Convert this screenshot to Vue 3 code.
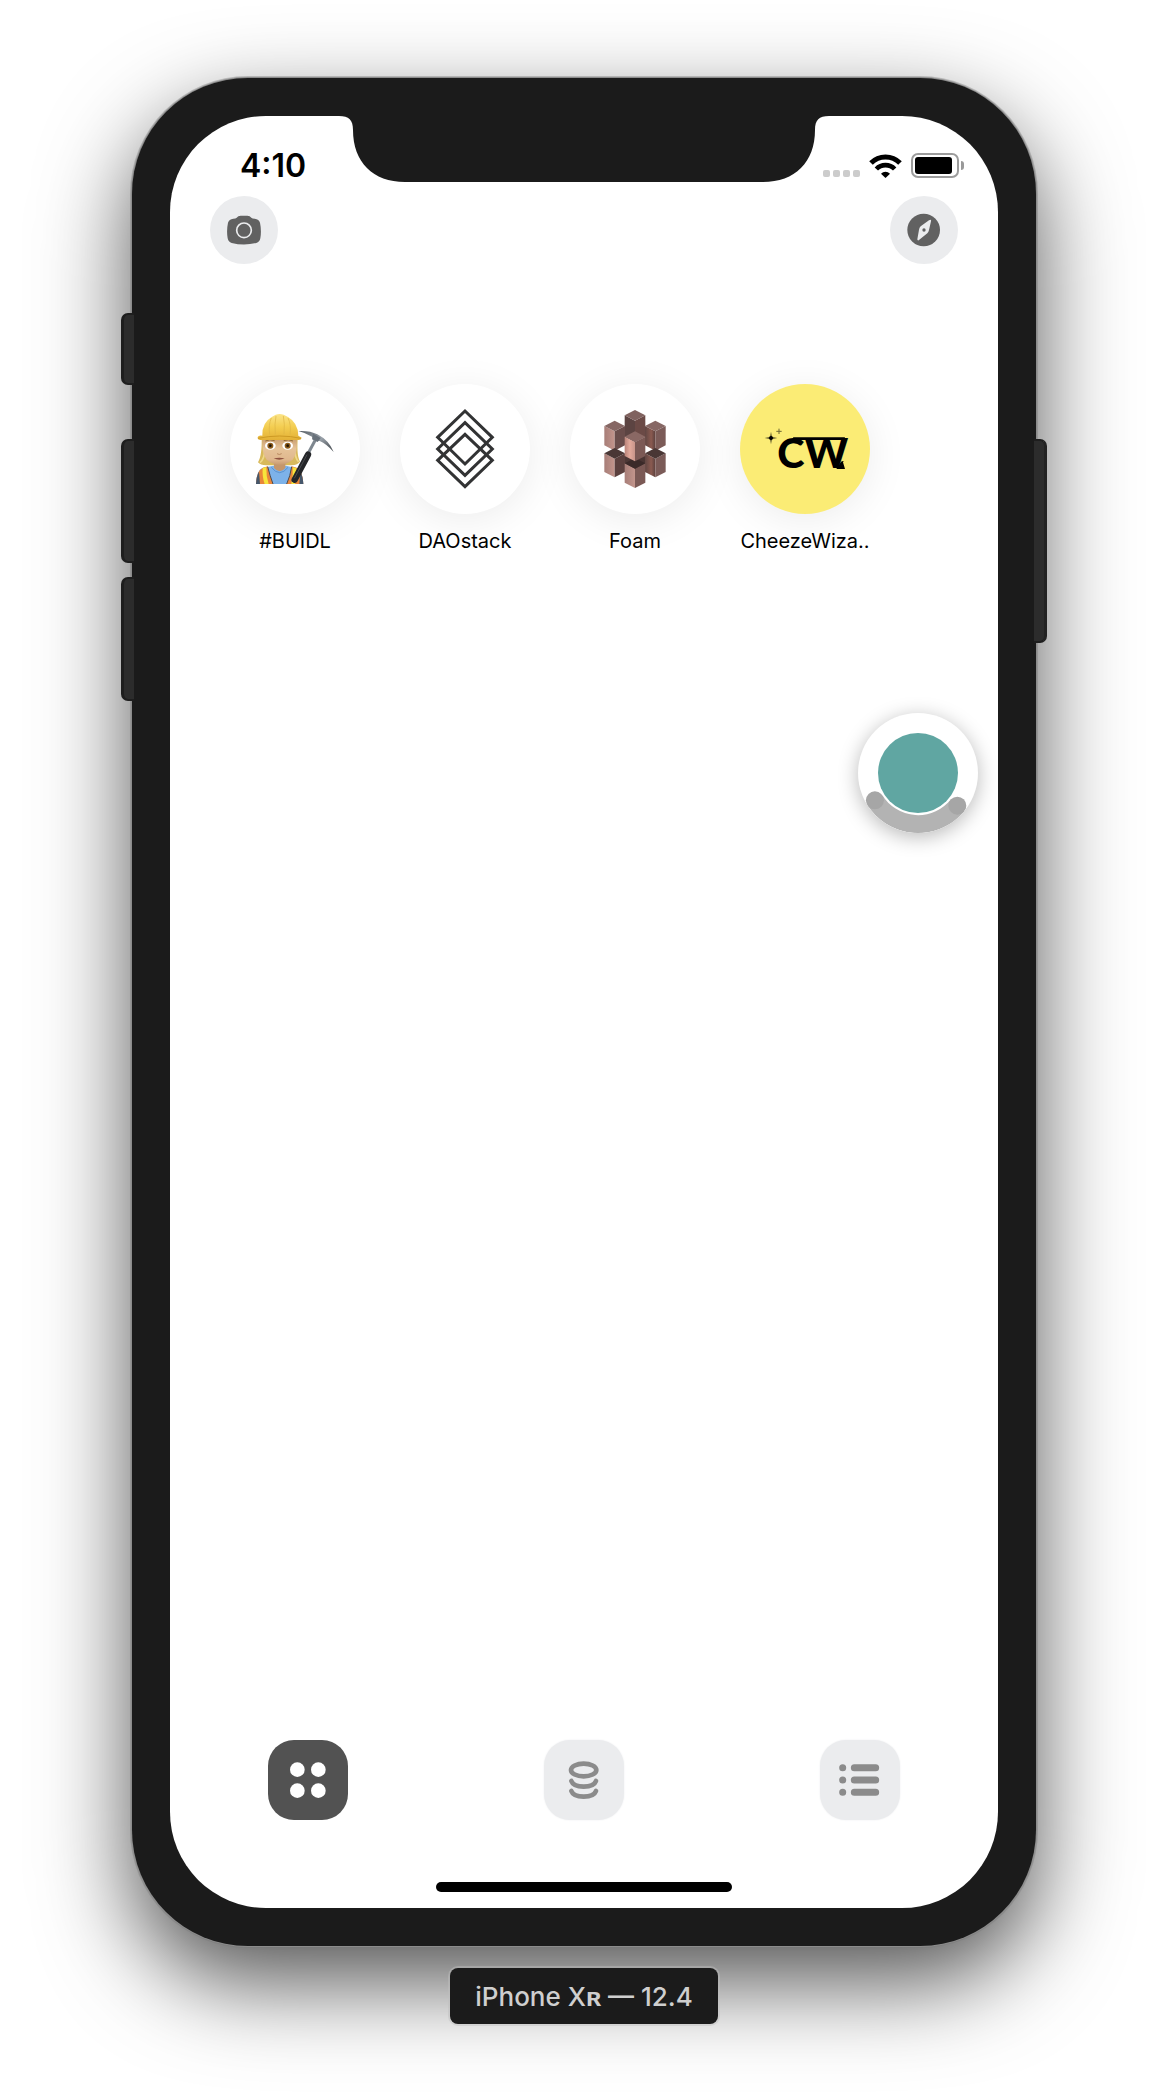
<script setup>
// Prisms of the Foam mark, painted back to front.
const prisms = [
  { x: 195, y: 78, h: 64, top: '#80625f', left: '#5c4442', right: '#6b4a46' },
  { x: 195, y: 194, h: 46, top: '#3d2d2c', left: '#4d3836', right: '#4a3533' },
  { x: 134, y: 110, h: 58, top: '#866764', left: 'url(#rose)', right: '#6a4d4b' },
  { x: 256, y: 110, h: 58, top: '#866764', left: 'url(#shade)', right: '#7b5b58' },
  { x: 134, y: 192, h: 56, top: '#4a3735', left: 'url(#rose)', right: '#5b403e' },
  { x: 256, y: 192, h: 56, top: '#4a3735', left: 'url(#shade)', right: '#7b5b58' },
  { x: 195, y: 222, h: 58, top: '#3b2a29', left: 'url(#rose)', right: '#7b5955' },
  { x: 195, y: 142, h: 58, top: '#8a6864', left: 'url(#bright)', right: '#7b5955' }
]
const face = {
  top: p => `${p.x - 31},${p.y + 16} ${p.x},${p.y} ${p.x + 31},${p.y + 16} ${p.x},${p.y + 32}`,
  left: p => `${p.x - 31},${p.y + 16} ${p.x},${p.y + 32} ${p.x},${p.y + 32 + p.h} ${p.x - 31},${p.y + 16 + p.h}`,
  right: p => `${p.x + 31},${p.y + 16} ${p.x},${p.y + 32} ${p.x},${p.y + 32 + p.h} ${p.x + 31},${p.y + 16 + p.h}`
}
const apps = [
  { id: 'buidl', name: '#BUIDL' },
  { id: 'daostack', name: 'DAOstack' },
  { id: 'foam', name: 'Foam' },
  { id: 'cheeze', name: 'CheezeWiza..' }
]
</script>

<template>
  <div class="page">
    <div class="device">
      <i class="key key-mute"></i>
      <i class="key key-up"></i>
      <i class="key key-down"></i>
      <i class="key key-power"></i>

      <main class="screen">
        <svg class="notch" viewBox="0 0 490 66" aria-hidden="true">
          <path d="M0 0C10 0 14 4 14 14C14 46 34 66 66 66H424C456 66 476 46 476 14C476 4 480 0 490 0Z" fill="#1b1b1b" />
        </svg>

        <div class="status">
          <time>4:10</time>
          <div class="indicators">
            <div class="signal"><i></i><i></i><i></i><i></i></div>
            <svg class="wifi" viewBox="0 0 99 72" fill="none" stroke="#000" aria-hidden="true">
              <path d="M6 27A61 61 0 0 1 93 27" stroke-width="15" />
              <path d="M22 45A38 38 0 0 1 77 45" stroke-width="14" />
              <path d="M49.500 72L36 59A19 19 0 0 1 63 59Z" fill="#000" stroke="none" />
            </svg>
            <div class="battery"><i class="charge"></i></div>
          </div>
        </div>

        <header class="toolbar">
          <button class="round" aria-label="Camera">
            <svg viewBox="0 0 204 204" aria-hidden="true">
              <path d="M80 65Q84 59 92 59H112Q120 59 124 65Q127 68 134 68Q147 69 150 80Q155 104 151 127Q149 138 139 141Q102 150 65 141Q55 138 53 127Q49 104 54 80Q57 69 70 68Q77 68 80 65Z" fill="#616161" />
              <circle cx="102" cy="103" r="22" fill="none" stroke="#ebecee" stroke-width="5" />
            </svg>
          </button>
          <button class="round" aria-label="Explore">
            <svg viewBox="0 0 204 204" aria-hidden="true">
              <circle cx="101" cy="102" r="49" fill="#616161" />
              <path d="M122 71Q124 72 123 76L117 102Q116 108 112 112L86 133Q82 134 82 130L87 101Q88 95 92 91L117 73Z" fill="#ebecee" />
              <circle cx="102" cy="102" r="5" fill="#616161" />
            </svg>
          </button>
        </header>

        <section class="apps">
          <button v-for="app in apps" :key="app.id" class="app">
            <span class="disc" :class="app.id">
              <svg v-if="app.id === 'buidl'" viewBox="0 0 390 390" aria-hidden="true">
                <defs>
                  <linearGradient id="hat" x1="0" y1="0" x2="0" y2="1">
                    <stop offset="0" stop-color="#fbe488" /><stop offset="0.500" stop-color="#f3cd50" /><stop offset="1" stop-color="#e3b036" />
                  </linearGradient>
                  <linearGradient id="skin" x1="0" y1="0" x2="0" y2="1">
                    <stop offset="0" stop-color="#c79c6f" /><stop offset="0.400" stop-color="#e6c399" /><stop offset="0.800" stop-color="#e0b88e" /><stop offset="1" stop-color="#c99b70" />
                  </linearGradient>
                  <linearGradient id="steel" x1="0" y1="0" x2="1" y2="1">
                    <stop offset="0" stop-color="#555c63" /><stop offset="0.500" stop-color="#9aa2aa" /><stop offset="1" stop-color="#3b4045" />
                  </linearGradient>
                </defs>
                <path d="M95 160C96 195 93 220 84 235Q92 245 112 244L184 244Q204 242 210 233C201 215 202 190 203 160Z" fill="#d8b95b" />
                <path d="M90 236Q104 225 104 196M206 234Q194 222 195 196" fill="none" stroke="#efd98a" stroke-width="5" />
                <path d="M78 300Q79 260 97 252L130 245H168L200 252Q218 260 220 300Z" fill="#7db2e9" />
                <path d="M132 232H166V252Q149 272 132 252Z" fill="#c4966c" />
                <path d="M124 250Q149 282 174 250" fill="none" stroke="#5a93d1" stroke-width="3" />
                <path d="M78 300Q79 260 99 251L113 247Q119 275 129 300Z" fill="#e9863a" />
                <path d="M220 300Q219 260 200 251L185 247Q182 275 170 300Z" fill="#e9863a" />
                <path d="M98 252Q96 278 104 300H116Q108 276 109 249Z" fill="#f7e43b" />
                <path d="M188 250Q190 272 184 300H195Q202 274 199 252Z" fill="#f7e43b" />
                <path d="M78 300Q79 277 87 263L90 300ZM220 300Q219 277 211 263L208 300Z" fill="#45576c" />
                <path d="M113 248Q120 276 129 300M185 248Q181 276 170 300" fill="none" stroke="#4a4b4f" stroke-width="3" />
                <path d="M97 162H200Q204 207 188 227Q170 242 149 242Q128 242 110 227Q94 207 97 162Z" fill="url(#skin)" />
                <ellipse cx="121" cy="185" rx="16" ry="12" fill="#fff" />
                <ellipse cx="173" cy="185" rx="16" ry="12" fill="#fff" />
                <circle cx="121" cy="185" r="9" fill="#8a5a1b" /><circle cx="121" cy="185" r="4" fill="#1e1307" />
                <circle cx="173" cy="185" r="9" fill="#8a5a1b" /><circle cx="173" cy="185" r="4" fill="#1e1307" />
                <path d="M106 171Q119 164 134 170M161 170Q176 164 189 171" fill="none" stroke="#8f6a36" stroke-width="3" />
                <path d="M141 209Q148 214 155 209" fill="none" stroke="#b98a60" stroke-width="3" />
                <path d="M131 223Q148 219 164 223Q148 231 131 223Z" fill="#8f5240" />
                <path d="M97 155Q96 116 124 100L137 92Q149 88 161 92L174 99Q204 116 205 155L215 161Q214 169 204 168H92Q82 168 83 160Q85 153 97 155Z" fill="url(#hat)" />
                <path d="M124 102Q115 122 119 152M174 102Q184 122 180 152M138 96Q133 119 136 151M160 96Q165 119 162 151" fill="none" stroke="#dcb344" stroke-width="2" />
                <path d="M84 163Q149 149 213 163" fill="none" stroke="#cd9a24" stroke-width="3" />
                <path d="M256 168L188 294" stroke="#7e878f" stroke-width="9" />
                <path d="M234 212L194 287" stroke="#242629" stroke-width="19" stroke-linecap="round" />
                <path d="M231 212L193 283" stroke="#494c50" stroke-width="3" />
                <path d="M205 141Q239 139 262 151Q297 169 311 204Q290 180 269 171L252 170L246 158Q225 146 205 141Z" fill="url(#steel)" />
                <path d="M249 149L272 162L263 174L246 166Z" fill="#68717a" />
              </svg>

              <svg v-else-if="app.id === 'daostack'" viewBox="0 0 390 390" fill="none" stroke="#323334" stroke-width="9" aria-hidden="true">
                <path d="M195 81L277 160L195 240L113 160Z" />
                <path d="M195 116L277 195L195 274L113 195Z" />
                <path d="M195 151L277 229L195 308L113 229Z" />
              </svg>

              <svg v-else-if="app.id === 'foam'" viewBox="0 0 390 390" aria-hidden="true">
                <defs>
                  <linearGradient id="rose"><stop offset="0" stop-color="#a77e78" /><stop offset="1" stop-color="#c3958c" /></linearGradient>
                  <linearGradient id="bright"><stop offset="0" stop-color="#b98379" /><stop offset="0.500" stop-color="#e3aa9c" /><stop offset="1" stop-color="#c8958a" /></linearGradient>
                  <linearGradient id="shade"><stop offset="0" stop-color="#604643" /><stop offset="0.600" stop-color="#8a5a50" /><stop offset="1" stop-color="#5c413e" /></linearGradient>
                </defs>
                <g v-for="(p, i) in prisms" :key="i">
                  <polygon :points="face.left(p)" :fill="p.left" />
                  <polygon :points="face.right(p)" :fill="p.right" />
                  <polygon :points="face.top(p)" :fill="p.top" />
                </g>
              </svg>

              <svg v-else viewBox="0 0 390 390" aria-hidden="true">
                <path d="M93 143L95 160L112 162L95 164L93 181L91 164L74 162L91 160Z" fill="#000" />
                <circle cx="93" cy="162" r="6" fill="#000" />
                <path d="M117 134V150M109 142H125" stroke="#6d6733" stroke-width="3" />
                <text x="112" y="253" class="mark">CW</text>
                <path d="M160 160H315L312 168H156Z" fill="#000" />
                <path d="M289 255L301 236Q304 230 311 231L309 235L315 255Z" fill="#000" />
              </svg>
            </span>
            <span class="name">{{ app.name }}</span>
          </button>
        </section>

        <button class="float" aria-label="Assistive control">
          <svg viewBox="0 0 120 120" aria-hidden="true">
            <circle cx="60" cy="60" r="40" fill="#60a6a2" />
            <path d="M16.900 87.300A51 51 0 0 0 99.300 92.700" fill="none" stroke="#b3b3b3" stroke-width="18" />
            <circle cx="16.900" cy="87.300" r="9" fill="#a6a6a6" />
            <circle cx="99.300" cy="92.700" r="9" fill="#a6a6a6" />
          </svg>
        </button>

        <nav class="tabs">
          <button class="tab active" aria-label="Apps">
            <svg viewBox="0 0 240 240" fill="#fff" aria-hidden="true">
              <circle cx="88" cy="89" r="22" /><circle cx="151" cy="89" r="22" />
              <circle cx="88" cy="152" r="22" /><circle cx="151" cy="152" r="22" />
            </svg>
          </button>
          <button class="tab" aria-label="Assets">
            <svg viewBox="0 0 240 240" fill="none" stroke="#8b8b8b" stroke-width="14" stroke-linecap="round" aria-hidden="true">
              <ellipse cx="119" cy="90" rx="38" ry="19" />
              <path d="M82 123Q88 140 119 140Q150 140 156 123M82 153Q88 170 119 170Q150 170 156 153" />
            </svg>
          </button>
          <button class="tab" aria-label="Activity">
            <svg viewBox="0 0 240 240" fill="none" stroke="#8b8b8b" stroke-width="21" stroke-linecap="round" aria-hidden="true">
              <path d="M68 83H68.100M68 120H68.100M68 157H68.100M103 83H167M103 120H167M103 157H167" />
            </svg>
          </button>
        </nav>
        <div class="home"></div>
      </main>
    </div>
    <p class="label">iPhone X<b>ʀ</b> — 12.4</p>
  </div>
</template>

<style>
body {
  margin: 0;
  background: #fff;
}
</style>

<style scoped>
.page {
  box-sizing: border-box;
  min-height: 100vh;
  padding: 78px 132px 72px;
  display: flex;
  flex-direction: column;
  align-items: center;
  gap: 22px;
  overflow: hidden;
  font-family: Inter, "Liberation Sans", sans-serif;
  color: #000;
}
button {
  border: 0;
  padding: 0;
  margin: 0;
  background: none;
  font: inherit;
  color: inherit;
}
svg {
  display: block;
}
.device {
  position: relative;
  box-sizing: border-box;
  width: 100%;
  padding: 38px;
  border-radius: 116px;
  background: #1b1b1b;
  box-shadow: 0 0 0 1px #8c8c8c, 0 0 0 2px rgba(120, 120, 120, 0.4), 0 36px 92px rgba(0, 0, 0, 0.68);
}
.key {
  position: absolute;
  box-sizing: border-box;
  width: 13px;
  height: 124px;
  left: -11px;
  background: #2c2c2c;
  border: 2px solid #1e1e1e;
  border-left-width: 3px;
  border-right: 0;
  border-radius: 7px 0 0 7px;
}
.key-mute {
  top: 235px;
  height: 72px;
}
.key-up {
  top: 361px;
}
.key-down {
  top: 499px;
}
.key-power {
  top: 361px;
  left: auto;
  right: -11px;
  height: 204px;
  border-left: 0;
  border-right: 3px solid #222;
  border-radius: 0 7px 7px 0;
}
.screen {
  position: relative;
  display: flex;
  flex-direction: column;
  aspect-ratio: 828 / 1792;
  border-radius: 96px;
  background: #fff;
}
.notch {
  position: absolute;
  top: 0;
  left: 50%;
  width: 490px;
  height: 66px;
  margin-left: -245px;
}
.status {
  box-sizing: border-box;
  height: 80px;
  padding: 34px 34px 0 70px;
  display: flex;
  justify-content: space-between;
  align-items: flex-start;
}
.status time {
  font-size: 32px;
  line-height: 32px;
  font-weight: 600;
}
.indicators {
  display: flex;
  align-items: flex-end;
  gap: 9px;
  height: 28px;
}
.signal {
  display: flex;
  gap: 3px;
  padding-bottom: 1px;
}
.signal i {
  width: 7px;
  height: 7px;
  border-radius: 2px;
  background: #ccc;
}
.wifi {
  width: 33px;
  height: 24px;
}
.battery {
  position: relative;
  box-sizing: border-box;
  width: 48px;
  height: 25px;
  margin-right: 5px;
  padding: 2px;
  border: 2px solid #9c9c9c;
  border-radius: 7px;
}
.battery::after {
  content: "";
  position: absolute;
  top: 6px;
  right: -7px;
  width: 3px;
  height: 9px;
  border-radius: 0 4px 4px 0;
  background: #999;
}
.charge {
  display: block;
  width: 37px;
  height: 17px;
  border-radius: 3px;
  background: #000;
}
.toolbar {
  display: flex;
  justify-content: space-between;
  padding: 0 40px;
}
.round {
  width: 68px;
  height: 68px;
  border-radius: 50%;
  background: #ebecee;
}
.apps {
  display: flex;
  gap: 40px;
  padding: 120px 60px 0;
}
.app {
  width: 130px;
  display: flex;
  flex-direction: column;
  align-items: center;
  gap: 14px;
}
.disc {
  width: 130px;
  height: 130px;
  border-radius: 50%;
  background: #fff;
  box-shadow: 0 6px 40px rgba(0, 0, 0, 0.08);
}
.disc.cheeze {
  background: #fbec75;
}
.mark {
  font: 900 124px Lato, sans-serif;
}
.name {
  font-size: 20px;
  line-height: 26px;
  white-space: nowrap;
}
.float {
  position: absolute;
  top: 597px;
  right: 20px;
  width: 120px;
  height: 120px;
  border-radius: 50%;
  overflow: hidden;
  background: #fff;
  box-shadow: 0 4px 20px rgba(0, 0, 0, 0.28);
}
.tabs {
  display: flex;
  justify-content: space-between;
  margin-top: auto;
  padding: 0 98px 62px;
}
.tab {
  width: 80px;
  height: 80px;
  border-radius: 26px;
  background: #ebecee;
  box-shadow: 0 0 2px #ebecee;
}
.tab.active {
  background: #525252;
  box-shadow: none;
}
.home {
  align-self: center;
  width: 296px;
  height: 10px;
  margin-bottom: 16px;
  border-radius: 5px;
  background: #000;
}
.label {
  position: relative;
  margin: 0;
  padding: 2px 25px 0;
  border-radius: 8px;
  background: #1b1b1b;
  box-shadow: 0 0 0 2px rgba(190, 190, 190, 0.45);
  color: #cfcfcf;
  font-size: 26px;
  line-height: 54px;
  font-weight: 500;
}
</style>
